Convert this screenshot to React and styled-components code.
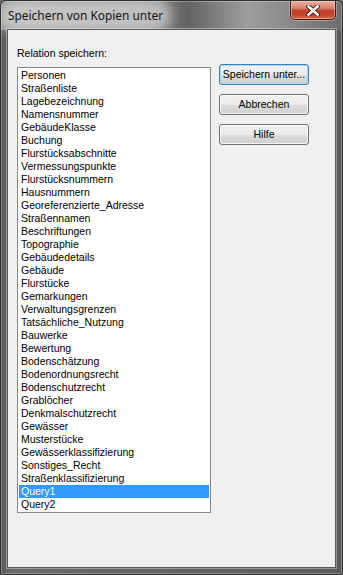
import React from 'react';
import styled, { createGlobalStyle } from 'styled-components';

const Global = createGlobalStyle`
  html, body { margin: 0; padding: 0; background: #6a6a6a; }
  #root { width: 343px; height: 575px; }
  * { box-sizing: border-box; }
`;

const Window = styled.div`
  width: 343px;
  height: 575px;
  display: flex;
  flex-direction: column;
  padding: 0 6px 6px;
  border: 1px solid #2f2f2f;
  border-radius: 6px 6px 2px 2px;
  background-color: #5f5f5f;
  background-image: linear-gradient(90deg, #8c8c8c 0%, #808080 40%, #636363 55%, #9e9e9e 72%, #8a8a8a 84%, #6c6c6c 100%),
    linear-gradient(90deg, #575757 0%, #6a6a6a 3%, #5c5c5c 100%);
  background-size: 100% 29px, 100% 100%;
  background-repeat: no-repeat;
  box-shadow: inset 0 0 0 1px rgba(255, 255, 255, 0.28);
  overflow: hidden;
`;

const TitleBar = styled.div`
  height: 28px;
  flex: none;
  display: flex;
  align-items: flex-start;
  justify-content: space-between;
  padding-left: 1px;
`;

const Title = styled.span`
  margin-top: 6px;
  height: 17px;
  line-height: 17px;
  font-family: "Noto Sans", "Open Sans", sans-serif;
  font-size: 11.9px;
  color: #141414;
  background: rgba(255, 255, 255, 0.5);
  border-radius: 8px;
  box-shadow: 0 0 12px 9px rgba(255, 255, 255, 0.5);
  white-space: nowrap;
`;

const CloseButton = styled.div`
  width: 46px;
  height: 19px;
  display: flex;
  align-items: center;
  justify-content: center;
  border: 1px solid #3e1c16;
  border-top: none;
  border-radius: 0 0 5px 5px;
  background: linear-gradient(180deg, #e9b0a2 0%, #d9826f 40%, #c4452d 52%, #c23f28 72%, #d46a50 100%);
  box-shadow: inset 0 0 0 1px rgba(255, 220, 210, 0.45), 0 0 0 1px rgba(255, 255, 255, 0.3);
`;

const Client = styled.div`
  flex: 1;
  border: 1px solid #5a5a5a;
  background: #f0f0f0;
  box-shadow: 0 0 0 1px rgba(255, 255, 255, 0.35);
  padding: 17px 0 0 9px;
  display: grid;
  grid-template-columns: 194px 90px;
  column-gap: 8px;
  align-items: start;
  font-family: "Liberation Sans", Arial, sans-serif;
  font-size: 10.5px;
  color: #000;
`;

const Column = styled.div`
  display: flex;
  flex-direction: column;
`;

const Label = styled.div`
  height: 13px;
  line-height: 13px;
  margin-bottom: 7px;
`;

const ListBox = styled.div`
  height: 446px;
  border: 1px solid #828790;
  padding: 1px;
  background: #fff;
  overflow: hidden;
`;

const Item = styled.div`
  height: 13px;
  line-height: 13px;
  padding-left: 2px;
  white-space: nowrap;
  background: ${p => (p.$selected ? '#3399ff' : 'transparent')};
  color: ${p => (p.$selected ? '#fff' : '#000')};
`;

const ButtonColumn = styled.div`
  display: flex;
  flex-direction: column;
  gap: 9px;
  margin-top: 17px;
`;

const Button = styled.div`
  width: 90px;
  height: 21px;
  display: flex;
  align-items: center;
  justify-content: center;
  border: 1px solid ${p => (p.$default ? '#3c7fb1' : '#707070')};
  border-radius: 3px;
  background: linear-gradient(180deg, #f2f2f2 0%, #ebebeb 50%, #dddddd 51%, #cfcfcf 100%);
  box-shadow: inset 0 0 0 1px ${p => (p.$default ? '#a7dcf6' : 'rgba(255,255,255,0.75)')};
  line-height: 13px;
  white-space: nowrap;
`;

const items = [
  'Personen', 'Straßenliste', 'Lagebezeichnung', 'Namensnummer', 'GebäudeKlasse', 'Buchung',
  'Flurstücksabschnitte', 'Vermessungspunkte', 'Flurstücksnummern', 'Hausnummern',
  'Georeferenzierte_Adresse', 'Straßennamen', 'Beschriftungen', 'Topographie', 'Gebäudedetails',
  'Gebäude', 'Flurstücke', 'Gemarkungen', 'Verwaltungsgrenzen', 'Tatsächliche_Nutzung', 'Bauwerke',
  'Bewertung', 'Bodenschätzung', 'Bodenordnungsrecht', 'Bodenschutzrecht', 'Grablöcher',
  'Denkmalschutzrecht', 'Gewässer', 'Musterstücke', 'Gewässerklassifizierung', 'Sonstiges_Recht',
  'Straßenklassifizierung', 'Query1', 'Query2',
];

function CloseX() {
  return (
    <svg width="14" height="11" viewBox="0 0 14 11">
      <path d="M2.5 1.5 L11.5 9.5 M11.5 1.5 L2.5 9.5" stroke="#4a2018" strokeWidth="4.6" strokeLinecap="square" fill="none" />
      <path d="M2.5 1.5 L11.5 9.5 M11.5 1.5 L2.5 9.5" stroke="#ffffff" strokeWidth="2.6" strokeLinecap="square" fill="none" />
    </svg>
  );
}

export default function App() {
  return (
    <>
      <Global />
      <Window>
        <TitleBar>
          <Title>Speichern von Kopien unter</Title>
          <CloseButton>
            <CloseX />
          </CloseButton>
        </TitleBar>
        <Client>
          <Column>
            <Label>Relation speichern:</Label>
            <ListBox>
              {items.map(name => (
                <Item key={name} $selected={name === 'Query1'}>{name}</Item>
              ))}
            </ListBox>
          </Column>
          <ButtonColumn>
            <Button $default>Speichern unter...</Button>
            <Button>Abbrechen</Button>
            <Button>Hilfe</Button>
          </ButtonColumn>
        </Client>
      </Window>
    </>
  );
}
